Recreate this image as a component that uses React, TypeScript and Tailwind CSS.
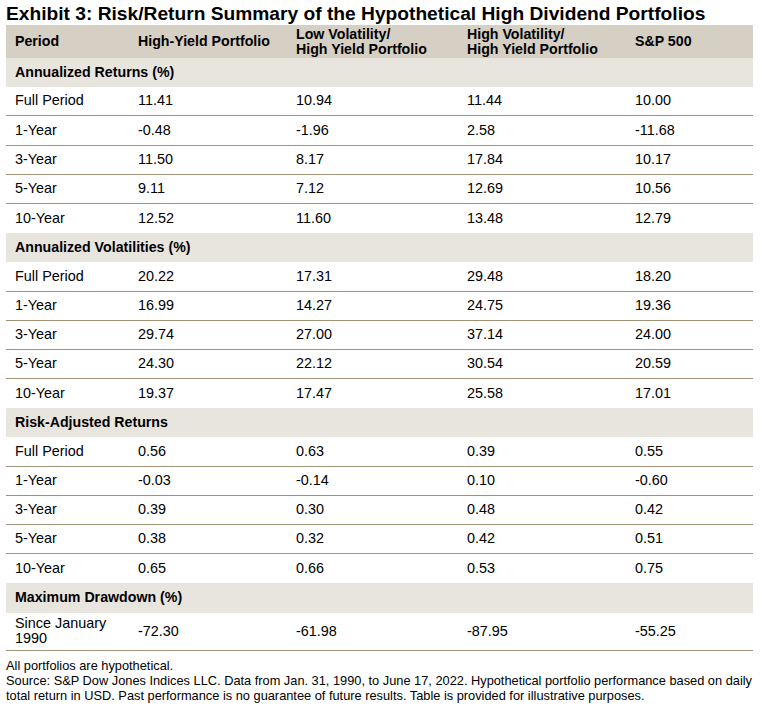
import React from "react";

type Row = [string, string, string, string, string];

const sections: { title: string; rows: Row[] }[] = [
  {
    title: "Annualized Returns (%)",
    rows: [
      ["Full Period", "11.41", "10.94", "11.44", "10.00"],
      ["1-Year", "-0.48", "-1.96", "2.58", "-11.68"],
      ["3-Year", "11.50", "8.17", "17.84", "10.17"],
      ["5-Year", "9.11", "7.12", "12.69", "10.56"],
      ["10-Year", "12.52", "11.60", "13.48", "12.79"],
    ],
  },
  {
    title: "Annualized Volatilities (%)",
    rows: [
      ["Full Period", "20.22", "17.31", "29.48", "18.20"],
      ["1-Year", "16.99", "14.27", "24.75", "19.36"],
      ["3-Year", "29.74", "27.00", "37.14", "24.00"],
      ["5-Year", "24.30", "22.12", "30.54", "20.59"],
      ["10-Year", "19.37", "17.47", "25.58", "17.01"],
    ],
  },
  {
    title: "Risk-Adjusted Returns",
    rows: [
      ["Full Period", "0.56", "0.63", "0.39", "0.55"],
      ["1-Year", "-0.03", "-0.14", "0.10", "-0.60"],
      ["3-Year", "0.39", "0.30", "0.48", "0.42"],
      ["5-Year", "0.38", "0.32", "0.42", "0.51"],
      ["10-Year", "0.65", "0.66", "0.53", "0.75"],
    ],
  },
];

const grid = "grid grid-cols-[123px_158px_171px_168px_1fr]";

export default function App() {
  return (
    <div
      className="w-[763px] h-[710px] bg-white text-black overflow-hidden"
      style={{ fontFamily: '"Liberation Sans", Arial, sans-serif' }}
    >
      <div className="pl-[6px] pt-[3px] h-[25px] text-[19.2px] leading-[22px] font-bold whitespace-nowrap">
        Exhibit 3: Risk/Return Summary of the Hypothetical High Dividend Portfolios
      </div>
      <div className="mx-[6px] w-[747px]">
        <div className={`${grid} h-[33px] bg-[#d6cfc4] text-[14.2px] leading-[15px] font-bold items-center`}>
          <div className="pl-[9px]">Period</div>
          <div className="pl-[9px]">High-Yield Portfolio</div>
          <div className="pl-[9px]">
            Low Volatility/
            <br />
            High Yield Portfolio
          </div>
          <div className="pl-[9px]">
            High Volatility/
            <br />
            High Yield Portfolio
          </div>
          <div className="pl-[9px]">S&amp;P 500</div>
        </div>
        {sections.map((s) => (
          <div key={s.title}>
            <div className="h-[29.2px] bg-[#e8e5df] flex items-center pl-[9px] text-[14.2px] font-bold">
              {s.title}
            </div>
            {s.rows.map((r, i) => (
              <div
                key={r[0]}
                className={`${grid} h-[29.2px] items-center text-[14.4px] ${
                  i < s.rows.length - 1 ? "border-b border-[#a09377]" : ""
                }`}
              >
                {r.map((c, j) => (
                  <div key={j} className="pl-[9px]">
                    {c}
                  </div>
                ))}
              </div>
            ))}
          </div>
        ))}
        <div className="h-[29.2px] bg-[#e8e5df] flex items-center pl-[9px] text-[14.2px] font-bold">
          Maximum Drawdown (%)
        </div>
        <div className={`${grid} h-[38px] items-center text-[14.4px] leading-[15px] border-b border-[#a09377]`}>
          <div className="pl-[9px]">
            Since January
            <br />
            1990
          </div>
          <div className="pl-[9px]">-72.30</div>
          <div className="pl-[9px]">-61.98</div>
          <div className="pl-[9px]">-87.95</div>
          <div className="pl-[9px]">-55.25</div>
        </div>
      </div>
      <div className="pl-[6px] pt-[7px] text-[12.8px] leading-[15px] whitespace-nowrap">
        <div>All portfolios are hypothetical.</div>
        <div>
          Source: S&amp;P Dow Jones Indices LLC. Data from Jan. 31, 1990, to June 17, 2022. Hypothetical portfolio performance based on daily
          <br />
          total return in USD. Past performance is no guarantee of future results. Table is provided for illustrative purposes.
        </div>
      </div>
    </div>
  );
}
